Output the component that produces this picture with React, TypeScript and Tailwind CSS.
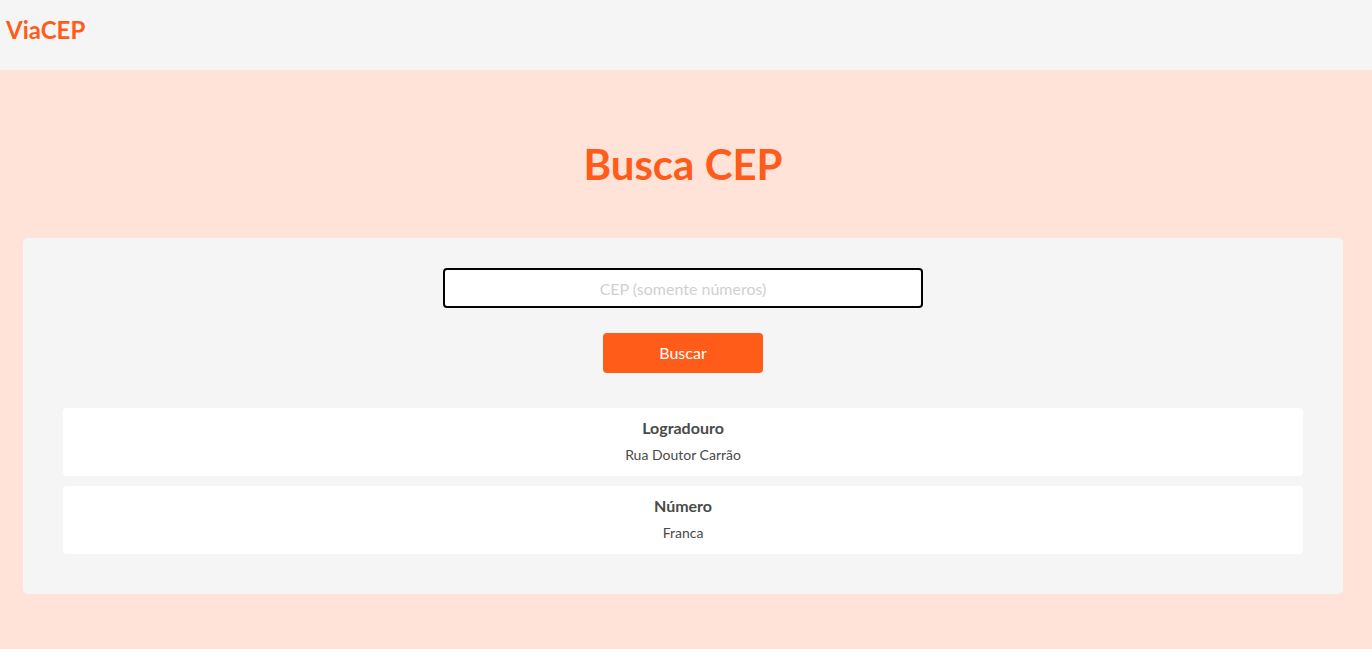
import React, { useState } from "react";

const resultados = [
  { id: 1, label: "Logradouro", value: "Rua Doutor Carrão" },
  { id: 2, label: "Número", value: "Franca" },
];

const App: React.FC = () => {
  const [cep, setCep] = useState("");

  return (
    <div className="min-h-[649px] bg-[#ffe3d8] font-['Lato','Noto_Sans',sans-serif] text-[#4a4a4a]">
      <header className="h-[70px] bg-[#f5f5f5] flex items-center px-[6px]">
        <span className="text-[24px] font-bold text-[#ff5c1a] -mt-[10px]">ViaCEP</span>
      </header>

      <main className="pl-[23px] pr-[29px] pb-[55px]">
        <h1 className="text-center text-[42px] font-bold text-[#ff5c1a] pt-[67px] pb-[47px] leading-[54px]">
          Busca CEP
        </h1>

        <div className="bg-[#f5f5f5] rounded-[5px] pt-[30px] pb-[40px] px-[40px]">
          <div className="flex flex-col items-center">
            <input
              value={cep}
              onChange={(e) => setCep(e.target.value)}
              placeholder="CEP (somente números)"
              className="w-[480px] h-[40px] bg-white border-2 border-black rounded-[4px] text-center text-[16px] placeholder:text-[#d4cfcf] outline-none"
            />
            <button className="mt-[25px] w-[160px] h-[40px] bg-[#ff5c1a] text-white text-[16px] rounded-[4px]">
              Buscar
            </button>
          </div>

          <div className="mt-[35px] flex flex-col gap-[10px]">
            {resultados.map((r) => (
              <div key={r.id} className="bg-white rounded-[4px] h-[68px] flex flex-col items-center pt-[10px]">
                <span className="text-[16px] font-bold leading-[20px]">{r.label}</span>
                <span className="text-[14px] mt-[8px] leading-[18px]">{r.value}</span>
              </div>
            ))}
          </div>
        </div>
      </main>
    </div>
  );
};

export default App;
